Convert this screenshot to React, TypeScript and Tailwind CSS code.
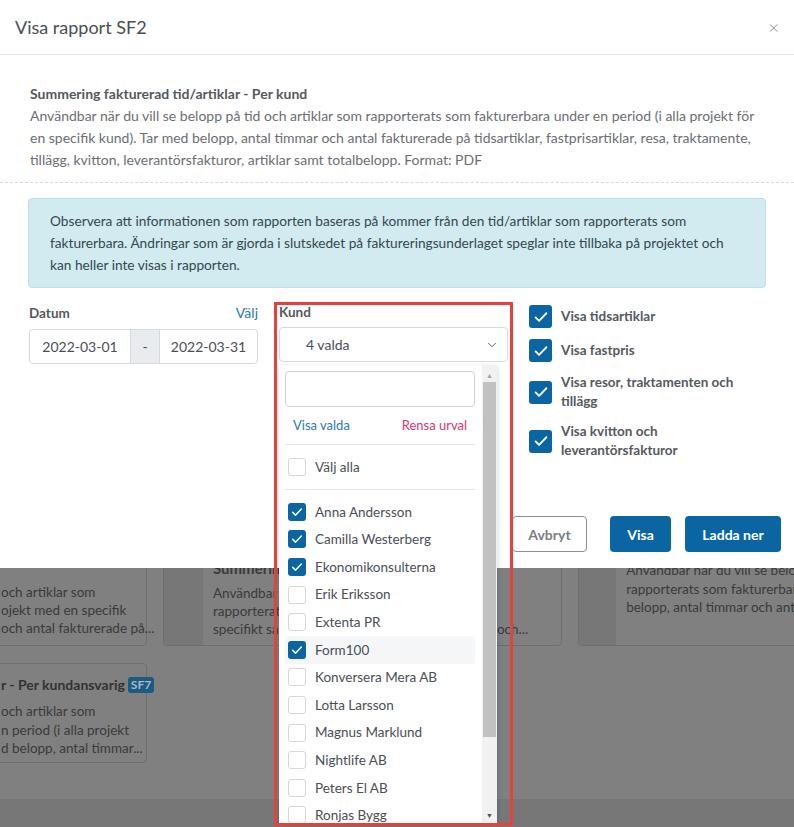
import { ChevronDown } from "lucide-react";

const customers = [
  { name: "Anna Andersson", checked: true },
  { name: "Camilla Westerberg", checked: true },
  { name: "Ekonomikonsulterna", checked: true },
  { name: "Erik Eriksson", checked: false },
  { name: "Extenta PR", checked: false },
  { name: "Form100", checked: true, hover: true },
  { name: "Konversera Mera AB", checked: false },
  { name: "Lotta Larsson", checked: false },
  { name: "Magnus Marklund", checked: false },
  { name: "Nightlife AB", checked: false },
  { name: "Peters El AB", checked: false },
  { name: "Ronjas Bygg", checked: false },
];

const options = [
  ["Visa tidsartiklar"],
  ["Visa fastpris"],
  ["Visa resor, traktamenten och", "tillägg"],
  ["Visa kvitton och", "leverantörsfakturor"],
];

const Check = ({ size }: { size: number }) => (
  <svg width={size} height={size} viewBox="0 0 24 24" fill="none">
    <path
      d="M5.5 12.5l4.2 4.2L18.5 7.5"
      stroke="white"
      strokeWidth={2.2}
      strokeLinecap="round"
      strokeLinejoin="round"
    />
  </svg>
);

const SmallBox = ({ checked }: { checked: boolean }) =>
  checked ? (
    <div className="flex h-[18px] w-[18px] items-center justify-center rounded-[3px] bg-[#0b65a3]">
      <Check size={16} />
    </div>
  ) : (
    <div className="h-[18px] w-[18px] rounded-[3px] border border-[#d3d6da] bg-white" />
  );

// background page, dimmed by the modal overlay
const Background = () => (
  <div className="flex h-full flex-col bg-[#808080] text-[13.5px] text-[#3a3a3a]">
    <div className="h-[520px]" />
    <div className="flex gap-4">
      <div className="-ml-[10px] h-[126px] w-[157px] shrink-0 whitespace-nowrap rounded-[4px] border border-[#6e6e6e] pl-[10px] pt-[62px] leading-[18px]">
        <div>och artiklar som</div>
        <div>ojekt med en specifik</div>
        <div>och antal fakturerade på...</div>
      </div>
      <div className="flex h-[126px] w-[399px] shrink-0 overflow-hidden rounded-[4px] border border-[#6e6e6e]">
        <div className="w-[39px] bg-[#777777]" />
        <div className="flex-1 whitespace-nowrap pl-[10px] pt-[38px] leading-[18px]">
          <div className="text-[15px] font-bold">Summering samlingsprojekt</div>
          <div className="mt-[7px]">Användbar när du vill se belopp på tid</div>
          <div>rapporterats som fakturerbara per projekt i ett</div>
          <div>specifikt samlingsprojekt. Tar med belopp per år och...</div>
        </div>
      </div>
      <div className="flex h-[126px] w-[300px] shrink-0 overflow-hidden rounded-[4px] border border-[#6e6e6e]">
        <div className="w-[39px] bg-[#777777]" />
        <div className="flex-1 whitespace-nowrap pl-[10px] pt-[40px] leading-[18.5px]">
          <div>Användbar när du vill se belopp</div>
          <div>rapporterats som fakturerbara i</div>
          <div>belopp, antal timmar och antal fakturerade</div>
        </div>
      </div>
    </div>
    <div className="mt-[17px] flex">
      <div className="-ml-[10px] h-[100px] w-[157px] shrink-0 rounded-[4px] border border-[#6e6e6e] pl-[10px] pt-[10px]">
        <div className="flex items-center whitespace-nowrap">
          <span className="text-[14px] font-bold text-[#333]">r - Per kundansvarig</span>
          <span className="ml-[3px] rounded-[3px] bg-[#1c5a84] px-[3px] text-[12px] font-bold leading-[16px] text-[#b0b8c0]">
            SF7
          </span>
        </div>
        <div className="mt-[7px] whitespace-nowrap leading-[18.5px]">
          <div>och artiklar som</div>
          <div>n period (i alla projekt</div>
          <div>d belopp, antal timmar...</div>
        </div>
      </div>
    </div>
    <div className="mt-[36px] flex-1 bg-[#777777]" />
  </div>
);

export default function App() {
  return (
    <div className="relative h-[827px] w-[794px] overflow-hidden font-['Lato',sans-serif]">
      <Background />

      {/* modal */}
      <div className="absolute left-0 right-0 top-0 h-[568px] bg-white">
        <div className="flex h-[55px] items-center justify-between border-b border-[#e6e6e6] pl-[15px] pr-[15px]">
          <h1 className="text-[18px] text-[#4a4e55]">Visa rapport SF2</h1>
          <span className="text-[18px] font-light text-[#8a8a8a]">×</span>
        </div>

        <div className="whitespace-nowrap border-b border-dashed border-[#d9d9d9] px-[30px] pb-[11px] pt-[28px] text-[14px] leading-[22px] text-[#6b6e73]">
          <div className="font-bold text-[#55595e]">Summering fakturerad tid/artiklar - Per kund</div>
          <p>
            Användbar när du vill se belopp på tid och artiklar som rapporterats som fakturerbara under en period (i alla projekt för
            <br />
            en specifik kund). Tar med belopp, antal timmar och antal fakturerade på tidsartiklar, fastprisartiklar, resa, traktamente,
            <br />
            tillägg, kvitton, leverantörsfakturor, artiklar samt totalbelopp. Format: PDF
          </p>
        </div>

        <div className="mx-[28px] mt-[15px] whitespace-nowrap rounded-[4px] border border-[#bde1e8] bg-[#d2ebf0] px-[21px] py-[11px] text-[13.7px] leading-[22px] text-[#34474d]">
          Observera att informationen som rapporten baseras på kommer från den tid/artiklar som rapporterats som
          <br />
          fakturerbara. Ändringar som är gjorda i slutskedet på faktureringsunderlaget speglar inte tillbaka på projektet och
          <br />
          kan heller inte visas i rapporten.
        </div>

        <div className="mt-[14px] flex pl-[29px]">
          {/* Datum */}
          <div className="w-[229px]">
            <div className="flex items-end justify-between">
              <span className="text-[13.5px] font-bold text-[#55595e]">Datum</span>
              <span className="text-[14px] text-[#1f78b4]">Välj</span>
            </div>
            <div className="mt-[6px] flex h-[35px] rounded-[4px] border border-[#d6d9dd] text-[14px] text-[#4a4e55]">
              <div className="flex w-[100px] items-center justify-center">2022-03-01</div>
              <div className="flex w-[30px] items-center justify-center border-x border-[#d6d9dd] bg-[#e9ecef]">-</div>
              <div className="flex flex-1 items-center justify-center">2022-03-31</div>
            </div>
          </div>

          {/* Kund */}
          <div className="relative ml-[21px] w-[229px]">
            <div className="h-[20px] text-[13.5px] font-bold text-[#55595e]">Kund</div>
            <div className="mt-[5px] flex h-[35px] items-center justify-between rounded-[4px] border border-[#d6d9dd] pl-[26px] pr-[8px] text-[14px] text-[#4a4e55]">
              <span>4 valda</span>
              <ChevronDown size={14} strokeWidth={1.6} className="text-[#555]" />
            </div>

            <div className="absolute left-0 top-[63px] z-10 flex h-[458px] w-[218px] bg-white shadow-[0_2px_6px_rgba(0,0,0,0.2)]">
              <div className="flex-1 pl-[6px] pr-[7px] pt-[6px]">
                <div className="h-[36px] rounded-[4px] border border-[#cfd3d8]" />
                <div className="flex h-[38px] items-center justify-between border-b border-[#e3e5e8] px-[8px] text-[13px]">
                  <span className="text-[#2779b3]">Visa valda</span>
                  <span className="text-[#e3346c]">Rensa urval</span>
                </div>
                <div className="flex h-[45px] items-center gap-[9px] border-b border-[#e3e5e8] pl-[3px] text-[13.5px] text-[#4a4e55]">
                  <SmallBox checked={false} />
                  <span>Välj alla</span>
                </div>
                <div className="pt-[8px]">
                  {customers.map((c) => (
                    <div
                      key={c.name}
                      className={
                        "flex h-[27.6px] items-center gap-[9px] rounded-[3px] pl-[3px] text-[13.5px] text-[#4a4e55] " +
                        (c.hover ? "bg-[#f4f6f8]" : "")
                      }
                    >
                      <SmallBox checked={c.checked} />
                      <span>{c.name}</span>
                    </div>
                  ))}
                </div>
              </div>
              <div className="flex w-[15px] flex-col items-center bg-[#f1f1f1]">
                <span className="mt-[5px] text-[7px] leading-[10px] text-[#a3a3a3]">▲</span>
                <div className="mt-[2px] h-[355px] w-[13px] bg-[#c1c1c1]" />
                <span className="mb-[3px] mt-auto text-[7px] leading-[10px] text-[#505050]">▼</span>
              </div>
            </div>
          </div>

          {/* options */}
          <div className="ml-[21px] flex flex-col gap-[11px] pt-[3px]">
            {options.map((lines) => (
              <div key={lines[0]} className="flex items-center gap-[9px]">
                <div className="flex h-[23px] w-[23px] shrink-0 items-center justify-center rounded-[3px] bg-[#0b65a3]">
                  <Check size={20} />
                </div>
                <div className="text-[13.5px] font-bold leading-[19px] text-[#55595e]">
                  {lines.map((l) => (
                    <div key={l}>{l}</div>
                  ))}
                </div>
              </div>
            ))}
          </div>
        </div>

        <div className="absolute bottom-[16px] right-[13px] flex gap-[14px] text-[14px] font-bold">
          <button className="mr-[9px] h-[36px] w-[75px] rounded-[4px] border border-[#8a8e94] bg-white text-[#7a7e84]">
            Avbryt
          </button>
          <button className="h-[36px] w-[61px] rounded-[4px] bg-[#0b65a3] text-white">Visa</button>
          <button className="h-[36px] w-[96px] rounded-[4px] bg-[#0b65a3] text-white">Ladda ner</button>
        </div>
      </div>

      {/* highlight frame */}
      <div className="pointer-events-none absolute left-[274px] top-[302px] z-20 h-[524px] w-[239px] border-[3px] border-[#e5413d]" />
    </div>
  );
}
